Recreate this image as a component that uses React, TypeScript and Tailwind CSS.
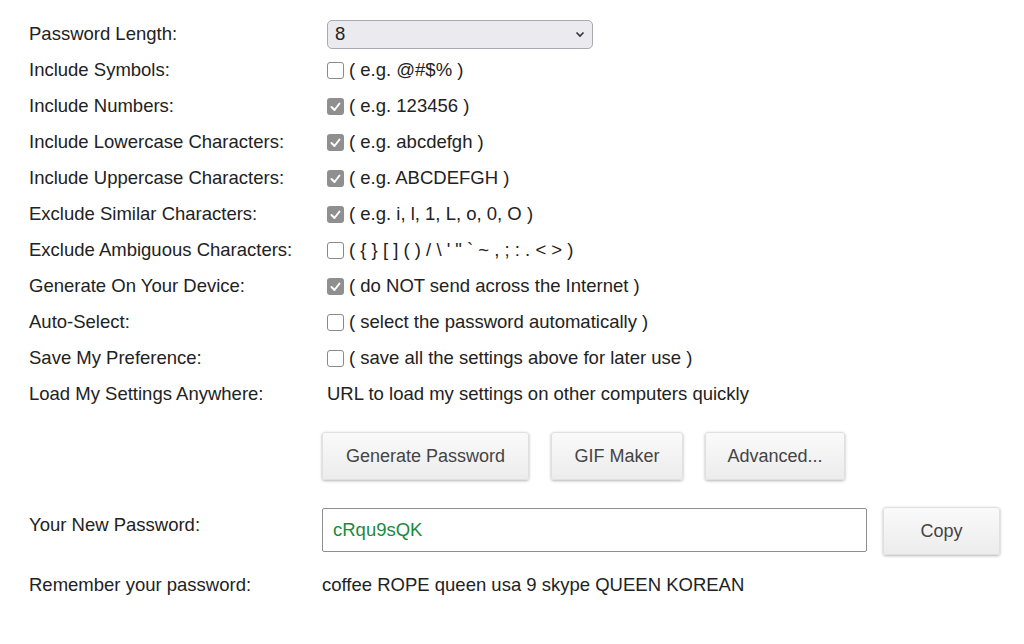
const rows: [string, boolean | null, string][] = [
  ["Include Symbols:", false, "( e.g. @#$% )"],
  ["Include Numbers:", true, "( e.g. 123456 )"],
  ["Include Lowercase Characters:", true, "( e.g. abcdefgh )"],
  ["Include Uppercase Characters:", true, "( e.g. ABCDEFGH )"],
  ["Exclude Similar Characters:", true, "( e.g. i, l, 1, L, o, 0, O )"],
  ["Exclude Ambiguous Characters:", false, "( { } [ ] ( ) / \\ ' \" ` ~ , ; : . < > )"],
  ["Generate On Your Device:", true, "( do NOT send across the Internet )"],
  ["Auto-Select:", false, "( select the password automatically )"],
  ["Save My Preference:", false, "( save all the settings above for later use )"],
  ["Load My Settings Anywhere:", null, "URL to load my settings on other computers quickly"],
];

function Box({ checked }: { checked: boolean }) {
  return checked ? (
    <span className="w-[17px] h-[17px] rounded-[3px] bg-[#8f8f8f] flex items-center justify-center mr-[5px] shrink-0">
      <svg width="13" height="13" viewBox="0 0 13 13"><path d="M2.5 7l3 3 5-6.5" fill="none" stroke="white" strokeWidth="2" strokeLinecap="round" strokeLinejoin="round" /></svg>
    </span>
  ) : (
    <span className="w-[17px] h-[17px] rounded-[3px] border-[1.5px] border-[#8a8a8a] bg-white mr-[5px] shrink-0" />
  );
}

const btn = "h-[48px] rounded-[3px] bg-gradient-to-b from-[#fafafa] to-[#ececec] border border-[#e0e0e0] shadow-[0_1px_3px_rgba(0,0,0,0.3)] text-[18px] text-[#444]";

export default function App() {
  return (
    <div className="w-[1024px] h-[644px] bg-white text-[18.5px] text-[#222] pt-[20px]" style={{ fontFamily: '"Liberation Sans", Arial, sans-serif' }}>
      <div className="flex items-center h-[28px] mb-[4px]">
        <div className="w-[299px] pl-[29px]">Password Length:</div>
        <div className="w-[266px] h-[29px] ml-[28px] rounded-[5px] border border-[#a9a9b0] bg-[#ebebef] flex items-center justify-between px-[7px]">
          <span>8</span>
          <svg width="10" height="7" viewBox="0 0 10 7"><path d="M1.5 1.5l3.5 3.5 3.5-3.5" fill="none" stroke="#333" strokeWidth="1.6" /></svg>
        </div>
      </div>
      {rows.map(([l, c, t]) => (
        <div key={l} className="flex items-center h-[36px]">
          <div className="w-[327px] pl-[29px]">{l}</div>
          <div className="flex items-center">
            {c !== null && <Box checked={c} />}
            <span>{t}</span>
          </div>
        </div>
      ))}
      <div className="flex gap-[22px] pl-[322px] mt-[20px]">
        <button className={`${btn} w-[207px]`}>Generate Password</button>
        <button className={`${btn} w-[132px]`}>GIF Maker</button>
        <button className={`${btn} w-[140px]`}>Advanced...</button>
      </div>
      <div className="flex items-start mt-[28px]">
        <div className="w-[322px] pl-[29px] pt-[3px]">Your New Password:</div>
        <div className="w-[545px] h-[44px] border border-[#8f8f8f] rounded-[2px] flex items-center pl-[10px] text-[#1b8a3c]">cRqu9sQK</div>
        <button className={`${btn} w-[117px] h-[44px] ml-[16px] -mt-[1px]`}>Copy</button>
      </div>
      <div className="flex items-center mt-[16px]">
        <div className="w-[322px] pl-[29px]">Remember your password:</div>
        <div>coffee ROPE queen usa 9 skype QUEEN KOREAN</div>
      </div>
    </div>
  );
}
